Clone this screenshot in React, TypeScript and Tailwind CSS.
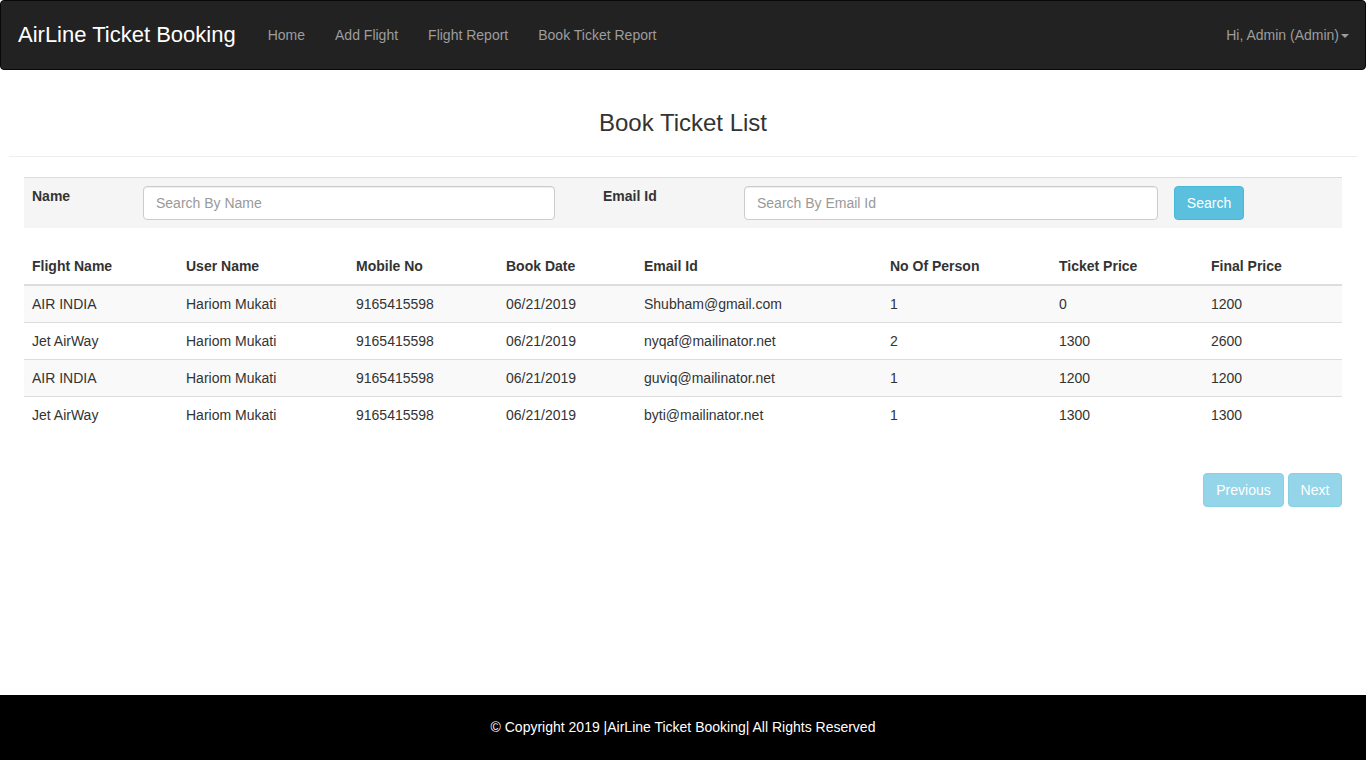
import React from "react";

const rows = [
  ["AIR INDIA", "Hariom Mukati", "9165415598", "06/21/2019", "Shubham@gmail.com", "1", "0", "1200"],
  ["Jet AirWay", "Hariom Mukati", "9165415598", "06/21/2019", "nyqaf@mailinator.net", "2", "1300", "2600"],
  ["AIR INDIA", "Hariom Mukati", "9165415598", "06/21/2019", "guviq@mailinator.net", "1", "1200", "1200"],
  ["Jet AirWay", "Hariom Mukati", "9165415598", "06/21/2019", "byti@mailinator.net", "1", "1300", "1300"],
];

const headers = [
  "Flight Name",
  "User Name",
  "Mobile No",
  "Book Date",
  "Email Id",
  "No Of Person",
  "Ticket Price",
  "Final Price",
];

const widths = ["w-[154px]", "w-[170px]", "w-[150px]", "w-[138px]", "w-[246px]", "w-[169px]", "w-[152px]", "w-[139px]"];

export default function App() {
  return (
    <div className="flex h-screen flex-col bg-white font-['Liberation_Sans',Arial,sans-serif] text-[14px] text-[#333]">
      {/* Navbar */}
      <nav className="flex h-[70px] shrink-0 items-center rounded-[4px] border border-[#080808] bg-[#222] pl-[17px] pr-[16px]">
        <span className="-mt-[2px] text-[22px] text-white">AirLine Ticket Booking</span>
        <div className="ml-[17px] flex items-center text-[#9d9d9d]">
          <a className="px-[15px]">Home</a>
          <a className="px-[15px]">Add Flight</a>
          <a className="px-[15px]">Flight Report</a>
          <a className="px-[15px]">Book Ticket Report</a>
        </div>
        <div className="ml-auto flex items-center text-[#9d9d9d]">
          Hi, Admin (Admin)
          <span className="ml-[2px] mt-[1px] h-0 w-0 border-x-[4px] border-t-[4px] border-x-transparent border-t-[#9d9d9d]" />
        </div>
      </nav>

      {/* Content */}
      <main className="flex-1 px-[9px]">
        <h3 className="mt-[38px] text-center text-[24px] leading-[30px] text-[#333]">Book Ticket List</h3>
        <hr className="mt-[18px] border-t border-[#eee]" />

        <div className="mx-[15px] mt-[20px]">
          <div className="flex h-[51px] items-start border-t border-[#ddd] bg-[#f5f5f5] pt-[8px]">
            <label className="ml-[8px] w-[111px] font-bold">Name</label>
            <input
              placeholder="Search By Name"
              className="h-[34px] w-[412px] rounded-[4px] border border-[#ccc] bg-white px-[12px] text-[14px] text-[#555] shadow-[inset_0_1px_1px_rgba(0,0,0,0.075)] placeholder:text-[#999]"
            />
            <label className="ml-[48px] w-[141px] font-bold">Email Id</label>
            <input
              placeholder="Search By Email Id"
              className="h-[34px] w-[414px] rounded-[4px] border border-[#ccc] bg-white px-[12px] text-[14px] text-[#555] shadow-[inset_0_1px_1px_rgba(0,0,0,0.075)] placeholder:text-[#999]"
            />
            <button className="ml-[16px] h-[34px] w-[70px] rounded-[4px] border border-[#46b8da] bg-[#5bc0de] text-white">
              Search
            </button>
          </div>

          <table className="mt-[20px] w-full border-collapse">
            <thead>
              <tr className="border-b-2 border-[#ddd]">
                {headers.map((h, i) => (
                  <th key={h} className={`${widths[i]} p-[8px] text-left font-bold leading-[20px]`}>
                    {h}
                  </th>
                ))}
              </tr>
            </thead>
            <tbody>
              {rows.map((r, ri) => (
                <tr key={ri} className={`border-t border-[#ddd] ${ri % 2 === 0 ? "bg-[#f9f9f9]" : ""}`}>
                  {r.map((c, ci) => (
                    <td key={ci} className="p-[8px] leading-[20px]">
                      {c}
                    </td>
                  ))}
                </tr>
              ))}
            </tbody>
          </table>

          <div className="mt-[40px] flex justify-end gap-[4px]">
            <button className="h-[34px] w-[81px] rounded-[4px] border border-[#46b8da] bg-[#5bc0de] text-white opacity-65">
              Previous
            </button>
            <button className="h-[34px] w-[54px] rounded-[4px] border border-[#46b8da] bg-[#5bc0de] text-white opacity-65">
              Next
            </button>
          </div>
        </div>
      </main>

      {/* Footer */}
      <footer className="flex h-[65px] shrink-0 items-center justify-center bg-black text-white">
        © Copyright 2019 |AirLine Ticket Booking| All Rights Reserved
      </footer>
    </div>
  );
}
